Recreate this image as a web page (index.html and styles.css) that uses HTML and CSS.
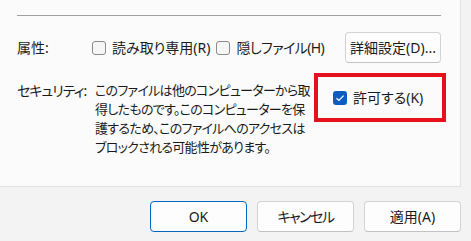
FILE: index.html
```html
<!DOCTYPE html>
<html lang="ja">
<head>
    <meta charset="UTF-8">
    <title>プロパティ</title>
    <link rel="stylesheet" href="styles.css">
</head>
<body>
    <div class="dialog">
        <div class="panel">
            <div class="rule"></div>

            <div class="attr-row">
                <div class="row-label">属性:</div>
                <span class="check"></span>
                <span class="check-label">読み取り専用(R)</span>
                <span class="check"></span>
                <span class="check-label hidden-label">隠しファイル(H)</span>
                <button class="button advanced">詳細設定(D)...</button>
            </div>

            <div class="security-row">
                <div class="row-label security-label">セキュリティ:</div>
                <div class="security-text">
                    このファイルは他のコンピューターから取<br>得したものです。このコンピューターを保<br>護するため、このファイルへのアクセスは<br>ブロックされる可能性があります。
                </div>
                <div class="allow-box">
                    <span class="check checked">
                        <svg width="10" height="8" viewBox="0 0 10 8"><path d="M1.5 4.2 L3.9 6.4 L8.6 1.6" fill="none" stroke="#fff" stroke-width="1.2"/></svg>
                    </span>
                    <span class="check-label">許可する(K)</span>
                </div>
            </div>
        </div>

        <div class="footer">
            <button class="button default">OK</button>
            <button class="button cancel">キャンセル</button>
            <button class="button">適用(A)</button>
        </div>
    </div>
</body>
</html>
```

FILE: styles.css
```css
body {
    margin: 0;
    background-color: #f3f3f3;
    color: #1a1a1a;
    font-family: "Noto Sans", "Noto Sans CJK JP", sans-serif;
    font-size: 14px;
    line-height: 19px;
    font-feature-settings: "palt";
}

.dialog {
    width: 471px;
    height: 241px;
    display: flex;
    flex-direction: column;
}

.panel {
    width: 443px;
    height: 171px;
    background-color: #fbfbfb;
    border-right: 1px solid #e2e2e2;
    border-bottom: 1px solid #e2e2e2;
    padding: 15px 0 0 17px;
}

.rule {
    width: 424px;
    height: 1px;
    background-color: #a0a0a0;
}

.attr-row {
    display: flex;
    align-items: center;
    width: 424px;
    height: 31px;
    margin-top: 16px;
}

.row-label {
    width: 75px;
}

.check {
    width: 12px;
    height: 12px;
    border: 1px solid #8b8b8b;
    border-radius: 3px;
    background-color: #f6f6f6;
    margin-right: 6px;
    display: flex;
    align-items: center;
    justify-content: center;
}

.check-label {
    margin-right: 6px;
}

.hidden-label {
    letter-spacing: -0.6px;
}

.check.checked {
    width: 14px;
    height: 14px;
    border: none;
    background-color: #0f5cc0;
}

.button {
    font: inherit;
    color: #1a1a1a;
    width: 97px;
    height: 31px;
    padding: 0;
    background-color: #fdfdfd;
    border: 1px solid #d3d3d3;
    border-bottom-color: #c2c2c2;
    border-radius: 4px;
}

.advanced {
    width: 96px;
    margin-left: auto;
}

.cancel {
    letter-spacing: -1.5px;
}

.security-row {
    display: flex;
    align-items: flex-start;
    margin-top: 10px;
}

.security-label {
    width: 78px;
    padding-top: 8px;
    letter-spacing: -1px;
}

.security-text {
    width: 219px;
    padding-top: 8px;
    font-size: 13px;
    letter-spacing: -0.7px;
    white-space: nowrap;
}

.allow-box {
    width: 109px;
    height: 41px;
    border: 4px solid #e5121d;
    padding-left: 15px;
    display: flex;
    align-items: center;
}

.allow-box .check {
    margin-right: 6px;
}

.footer {
    display: flex;
    justify-content: flex-end;
    gap: 10px;
    padding: 14px 10px 0 0;
}

.default {
    border-color: #0067c0;
}
```
